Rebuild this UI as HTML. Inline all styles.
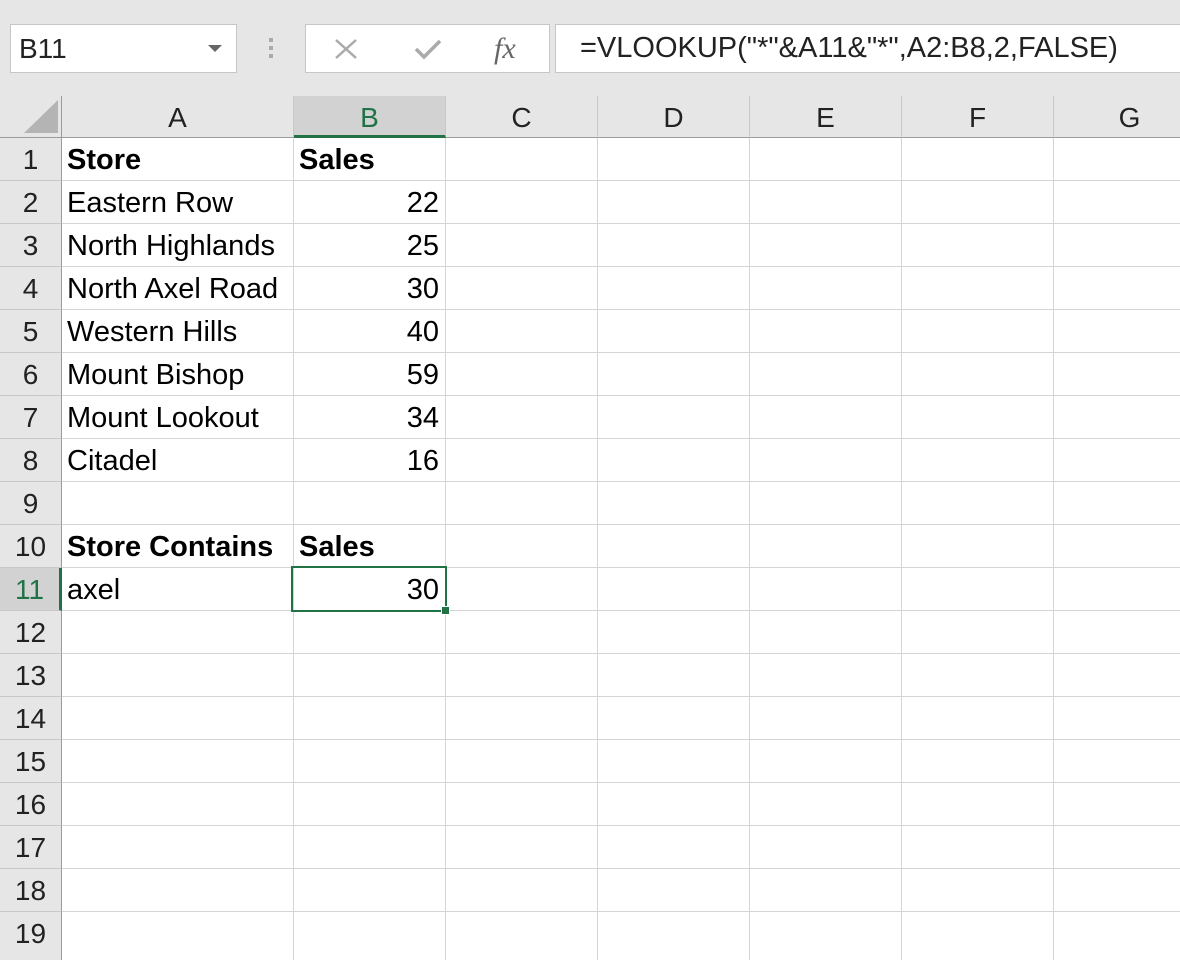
<!DOCTYPE html>
<html><head><style>
body{margin:0;width:1180px;height:960px;overflow:hidden;background:#fff;font-family:"Liberation Sans",sans-serif;position:relative}
.top{position:absolute;left:0;top:0;width:1180px;height:96px;background:#e6e6e6}
.box{position:absolute;background:#fff;border:1px solid #c6c6c6;box-sizing:border-box}
.hdr{position:absolute;top:96px;height:42px;background:#e6e6e6;border-right:1px solid #c8c8c8;border-bottom:1px solid #9b9b9b;box-sizing:border-box;text-align:center;font-size:28px;line-height:44px;color:#222}
.rh{position:absolute;left:0;width:62px;height:43px;background:#e6e6e6;border-bottom:1px solid #c8c8c8;border-right:1px solid #9b9b9b;box-sizing:border-box;text-align:center;font-size:28px;line-height:44px;color:#222}
.hl{position:absolute;left:62px;width:1118px;height:1px;background:#d4d4d4}
.vl{position:absolute;top:138px;width:1px;height:822px;background:#d4d4d4}
.c{position:absolute;font-size:29px;line-height:43px;color:#000;white-space:nowrap}
.b{font-weight:bold}
.r{text-align:right}
</style></head><body>
<div class="top"></div>
<div class="box" style="left:10px;top:24px;width:227px;height:49px;font-size:28px;line-height:47px;padding-left:8px;color:#222">B11</div>
<div style="position:absolute;left:208px;top:45px;width:0;height:0;border-left:7px solid transparent;border-right:7px solid transparent;border-top:7px solid #666"></div>
<div style="position:absolute;left:269px;top:38px;width:4px;height:4px;background:#aaa;box-shadow:0 8px 0 #aaa,0 16px 0 #aaa"></div>
<div class="box" style="left:305px;top:24px;width:245px;height:49px"></div>
<svg style="position:absolute;left:333px;top:37px" width="26" height="24"><path d="M3 3L23 21M23 3L3 21" stroke="#aaa" stroke-width="2.5"/></svg>
<svg style="position:absolute;left:413px;top:37px" width="30" height="24"><path d="M3 12L11 20L27 4" stroke="#aaa" stroke-width="3.5" fill="none"/></svg>
<div style="position:absolute;left:494px;top:32px;font-family:'Liberation Serif',serif;font-style:italic;font-size:30px;color:#666">fx</div>
<div class="box" style="left:555px;top:24px;width:640px;height:49px;font-size:29px;line-height:47px;padding-left:24px;color:#222">=VLOOKUP("*"&amp;A11&amp;"*",A2:B8,2,FALSE)</div>

<div style="position:absolute;left:0;top:96px;width:62px;height:42px;background:#e6e6e6;border-right:1px solid #9b9b9b;border-bottom:1px solid #9b9b9b;box-sizing:border-box"></div>
<svg style="position:absolute;left:22px;top:100px" width="38" height="34"><path d="M36 0L36 33L2 33Z" fill="#b4b4b4"/></svg>
<div class="hdr" style="left:62px;width:232px">A</div>
<div class="hdr" style="left:294px;width:152px;background:#d2d2d2;color:#217346;border-bottom:3px solid #217346">B</div>
<div class="hdr" style="left:446px;width:152px">C</div>
<div class="hdr" style="left:598px;width:152px">D</div>
<div class="hdr" style="left:750px;width:152px">E</div>
<div class="hdr" style="left:902px;width:152px">F</div>
<div class="hdr" style="left:1054px;width:152px">G</div>

<div class="rh" style="top:138px">1</div><div class="rh" style="top:181px">2</div><div class="rh" style="top:224px">3</div><div class="rh" style="top:267px">4</div><div class="rh" style="top:310px">5</div><div class="rh" style="top:353px">6</div><div class="rh" style="top:396px">7</div><div class="rh" style="top:439px">8</div><div class="rh" style="top:482px">9</div><div class="rh" style="top:525px">10</div><div class="rh" style="top:568px;background:#d2d2d2;color:#217346;border-right:3px solid #217346">11</div><div class="rh" style="top:611px">12</div><div class="rh" style="top:654px">13</div><div class="rh" style="top:697px">14</div><div class="rh" style="top:740px">15</div><div class="rh" style="top:783px">16</div><div class="rh" style="top:826px">17</div><div class="rh" style="top:869px">18</div><div class="rh" style="top:912px;height:48px;border-bottom:none">19</div>

<div class="hl" style="top:180px"></div><div class="hl" style="top:223px"></div><div class="hl" style="top:266px"></div><div class="hl" style="top:309px"></div><div class="hl" style="top:352px"></div><div class="hl" style="top:395px"></div><div class="hl" style="top:438px"></div><div class="hl" style="top:481px"></div><div class="hl" style="top:524px"></div><div class="hl" style="top:567px"></div><div class="hl" style="top:610px"></div><div class="hl" style="top:653px"></div><div class="hl" style="top:696px"></div><div class="hl" style="top:739px"></div><div class="hl" style="top:782px"></div><div class="hl" style="top:825px"></div><div class="hl" style="top:868px"></div><div class="hl" style="top:911px"></div>
<div class="vl" style="left:293px"></div><div class="vl" style="left:445px"></div><div class="vl" style="left:597px"></div><div class="vl" style="left:749px"></div><div class="vl" style="left:901px"></div><div class="vl" style="left:1053px"></div>

<div class="c b" style="left:67px;top:139px">Store</div><div class="c b" style="left:299px;top:139px">Sales</div>
<div class="c" style="left:67px;top:182px">Eastern Row</div><div class="c r" style="left:294px;width:145px;top:182px">22</div>
<div class="c" style="left:67px;top:225px">North Highlands</div><div class="c r" style="left:294px;width:145px;top:225px">25</div>
<div class="c" style="left:67px;top:268px">North Axel Road</div><div class="c r" style="left:294px;width:145px;top:268px">30</div>
<div class="c" style="left:67px;top:311px">Western Hills</div><div class="c r" style="left:294px;width:145px;top:311px">40</div>
<div class="c" style="left:67px;top:354px">Mount Bishop</div><div class="c r" style="left:294px;width:145px;top:354px">59</div>
<div class="c" style="left:67px;top:397px">Mount Lookout</div><div class="c r" style="left:294px;width:145px;top:397px">34</div>
<div class="c" style="left:67px;top:440px">Citadel</div><div class="c r" style="left:294px;width:145px;top:440px">16</div>
<div class="c b" style="left:67px;top:526px">Store Contains</div><div class="c b" style="left:299px;top:526px">Sales</div>
<div class="c" style="left:67px;top:569px">axel</div><div class="c r" style="left:294px;width:145px;top:569px">30</div>
<div style="position:absolute;left:291px;top:566px;width:156px;height:46px;border:2px solid #217346;box-sizing:border-box"></div>
<div style="position:absolute;left:441px;top:606px;width:7px;height:7px;background:#217346;border:1px solid #fff"></div>
</body></html>
